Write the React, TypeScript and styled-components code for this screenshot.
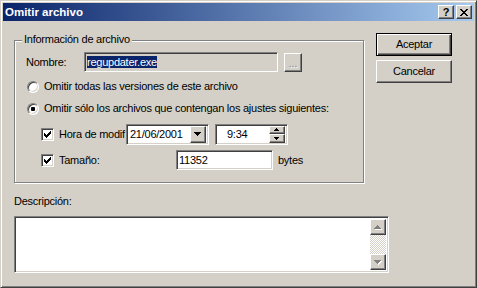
import React from "react";
import styled, { createGlobalStyle, css } from "styled-components";

const Global = createGlobalStyle`
  html, body { margin: 0; padding: 0; background: #D4D0C8; }
  body {
    font-family: "Liberation Sans", Arial, sans-serif;
    font-size: 11px;
    line-height: 13px;
    letter-spacing: -0.25px;
    color: #000;
  }
  * { box-sizing: border-box; }
`;

const raised = css`
  background: #D4D0C8;
  border: 1px solid;
  border-color: #ffffff #404040 #404040 #ffffff;
  box-shadow: inset -1px -1px 0 #808080;
`;

const sunken = css`
  border: 1px solid;
  border-color: #808080 #ffffff #ffffff #808080;
  box-shadow: inset 1px 1px 0 #404040, inset -1px -1px 0 #D4D0C8;
`;

const Window = styled.div`
  width: 477px;
  height: 288px;
  display: flex;
  flex-direction: column;
  background: #D4D0C8;
  border: 1px solid;
  border-color: #D4D0C8 #404040 #404040 #D4D0C8;
  box-shadow: inset 1px 1px 0 #ffffff, inset -1px -1px 0 #808080;
  padding: 2px;
`;

const TitleBar = styled.div`
  height: 18px;
  display: flex;
  align-items: center;
  padding: 0 2px 0 2px;
  background: linear-gradient(to right, #0a246a, #a6caf0);
`;

const Title = styled.span`
  flex: 1;
  color: #fff;
  font-weight: bold;
  font-size: 11.5px;
  line-height: 14px;
  letter-spacing: 0;
`;

const TitleBtn = styled.div<{ $gap?: number }>`
  ${raised};
  width: 16px;
  height: 14px;
  margin-left: ${(p) => p.$gap ?? 0}px;
  display: flex;
  align-items: center;
  justify-content: center;
  font-weight: bold;
  font-size: 11px;
  line-height: 12px;
  letter-spacing: 0;
`;

const Body = styled.div`
  flex: 1;
  display: flex;
  flex-direction: column;
  padding: 12px 22px 0 11px;
`;

const TopRow = styled.div`
  display: flex;
  align-items: flex-start;
  gap: 12px;
`;

const Group = styled.div`
  position: relative;
  width: 350px;
  height: 143px;
  margin-top: 7px;
  border: 1px solid #808080;
  box-shadow: 1px 1px 0 #ffffff, inset 1px 1px 0 #ffffff;
  padding: 11px 0 0 11px;
  display: flex;
  flex-direction: column;
`;

const Legend = styled.span`
  position: absolute;
  top: -8px;
  left: 7px;
  padding: 0 2px;
  background: #D4D0C8;
`;

const Row = styled.div<{ $mt?: number; $pl?: number; $h?: number }>`
  display: flex;
  align-items: center;
  margin-top: ${(p) => p.$mt ?? 0}px;
  padding-left: ${(p) => p.$pl ?? 0}px;
  height: ${(p) => p.$h ?? 13}px;
`;

const Label = styled.span<{ $w?: number; $ml?: number }>`
  display: inline-block;
  white-space: nowrap;
  margin-left: ${(p) => p.$ml ?? 0}px;
  ${(p) => (p.$w ? `width: ${p.$w}px; flex: none;` : "")}
`;

const Field = styled.div<{ $w: number; $h?: number; $bg?: string; $pl?: number; $ml?: number }>`
  ${sunken};
  width: ${(p) => p.$w}px;
  height: ${(p) => p.$h ?? 20}px;
  margin-left: ${(p) => p.$ml ?? 0}px;
  background: ${(p) => p.$bg ?? "#ffffff"};
  padding: 2px 2px 2px ${(p) => p.$pl ?? 2}px;
  display: flex;
  align-items: center;
  flex: none;
`;

const Selected = styled.span`
  background: #0a246a;
  color: #fff;
  line-height: 12px;
`;

const Browse = styled.div`
  ${raised};
  width: 18px;
  height: 19px;
  margin-left: 6px;
  display: flex;
  align-items: flex-end;
  justify-content: center;
  padding-bottom: 2px;
  color: #808080;
  text-shadow: 1px 1px 0 #ffffff;
  font-size: 10px;
  line-height: 10px;
  letter-spacing: 0px;
`;

const Radio = styled.span<{ $on?: boolean }>`
  width: 12px;
  height: 12px;
  flex: none;
  border-radius: 50%;
  border: 1px solid;
  border-color: #808080 #ffffff #ffffff #808080;
  background: #ffffff;
  box-shadow: inset 1px 1px 0 #404040, inset -1px -1px 0 #D4D0C8;
  display: flex;
  align-items: center;
  justify-content: center;
  &::after {
    content: "";
    display: ${(p) => (p.$on ? "block" : "none")};
    width: 4px;
    height: 4px;
    border-radius: 1px;
    background: #000;
  }
`;

const Check = styled.span`
  ${sunken};
  width: 13px;
  height: 13px;
  flex: none;
  background: #fff;
  display: flex;
  align-items: center;
  justify-content: center;
`;

const DropBtn = styled.div`
  ${raised};
  width: 16px;
  height: 17px;
  margin-left: auto;
  display: flex;
  align-items: center;
  justify-content: center;
  flex: none;
`;

const Spin = styled.div`
  margin-left: auto;
  width: 16px;
  height: 17px;
  display: flex;
  flex-direction: column;
  flex: none;
`;

const SpinBtn = styled.div<{ $h: number }>`
  ${raised};
  height: ${(p) => p.$h}px;
  display: flex;
  align-items: center;
  justify-content: center;
`;

const Buttons = styled.div`
  display: flex;
  flex-direction: column;
  gap: 4px;
`;

const PushButton = styled.div<{ $default?: boolean }>`
  width: 76px;
  height: 23px;
  display: flex;
  align-items: center;
  justify-content: center;
  background: #D4D0C8;
  ${(p) =>
    p.$default
      ? css`
          border: 1px solid #000;
          box-shadow: inset 1px 1px 0 #ffffff, inset -1px -1px 0 #404040,
            inset -2px -2px 0 #808080;
        `
      : css`
          border: 1px solid;
          border-color: #ffffff #404040 #404040 #ffffff;
          box-shadow: inset -1px -1px 0 #808080;
        `}
`;

const DescLabel = styled.div`
  margin-top: 12px;
`;

const Memo = styled.div`
  ${sunken};
  margin-top: 8px;
  width: 375px;
  height: 57px;
  background: #fff;
  padding: 2px;
  display: flex;
  justify-content: flex-end;
`;

const ScrollBar = styled.div`
  width: 16px;
  height: 100%;
  display: flex;
  flex-direction: column;
  background: repeating-conic-gradient(#ffffff 0 25%, #D4D0C8 0 50%) 0 0 / 2px 2px;
`;

const ScrollBtn = styled.div`
  ${raised};
  width: 16px;
  height: 16px;
  flex: none;
  display: flex;
  align-items: center;
  justify-content: center;
`;

const Track = styled.div`
  flex: 1;
`;

const CloseGlyph = () => (
  <svg width="8" height="7" viewBox="0 0 8 7" shapeRendering="crispEdges">
    <path
      d="M0 0h2v1h-2zM6 0h2v1h-2zM1 1h2v1h-2zM5 1h2v1h-2zM2 2h4v1h-4zM3 3h2v1h-2zM2 4h4v1h-4zM1 5h2v1h-2zM5 5h2v1h-2zM0 6h2v1h-2zM6 6h2v1h-2z"
      fill="#000"
    />
  </svg>
);

const CheckGlyph = () => (
  <svg width="7" height="7" viewBox="0 0 7 7" shapeRendering="crispEdges">
    <path
      d="M6 0h1v3h-1zM5 1h1v3h-1zM4 2h1v3h-1zM0 2h1v3h-1zM1 3h1v3h-1zM2 4h1v3h-1zM3 3h1v3h-1z"
      fill="#000"
    />
  </svg>
);

const Triangle = ({ up, w, color, emboss }: { up?: boolean; w: number; color: string; emboss?: boolean }) => {
  const h = Math.ceil(w / 2);
  const rows: string[] = [];
  for (let i = 0; i < h; i++) {
    const len = w - i * 2;
    const y = up ? h - 1 - i : i;
    rows.push(`M${i} ${y}h${len}v1h-${len}z`);
  }
  const d = rows.join("");
  return (
    <svg width={w + 1} height={h + 1} viewBox={`0 0 ${w + 1} ${h + 1}`} shapeRendering="crispEdges">
      {emboss && <path d={d} fill="#ffffff" transform="translate(1 1)" />}
      <path d={d} fill={color} />
    </svg>
  );
};

export default function App() {
  return (
    <>
      <Global />
      <Window>
        <TitleBar>
          <Title>Omitir archivo</Title>
          <TitleBtn>?</TitleBtn>
          <TitleBtn $gap={2}>
            <CloseGlyph />
          </TitleBtn>
        </TitleBar>
        <Body>
          <TopRow>
            <Group>
              <Legend>Información de archivo</Legend>
              <Row $h={20}>
                <Label $w={58}>Nombre:</Label>
                <Field $w={194} $bg="#D4D0C8">
                  <Selected>regupdater.exe</Selected>
                </Field>
                <Browse>...</Browse>
              </Row>
              <Row $mt={8} $pl={1}>
                <Radio />
                <Label $ml={5}>Omitir todas las versiones de este archivo</Label>
              </Row>
              <Row $mt={9} $pl={1}>
                <Radio $on />
                <Label $ml={5}>Omitir sólo los archivos que contengan los ajustes siguientes:</Label>
              </Row>
              <Row $mt={9} $pl={15} $h={21}>
                <Check>
                  <CheckGlyph />
                </Check>
                <Label $w={67} $ml={5}>Hora de modif</Label>
                <Field $w={83} $h={21} $pl={3}>
                  <span>21/06/2001</span>
                  <DropBtn>
                    <Triangle w={7} color="#000" />
                  </DropBtn>
                </Field>
                <Field $w={73} $h={21} $pl={11} $ml={6}>
                  <span>9:34</span>
                  <Spin>
                    <SpinBtn $h={8}>
                      <Triangle up w={5} color="#000" />
                    </SpinBtn>
                    <SpinBtn $h={9}>
                      <Triangle w={5} color="#000" />
                    </SpinBtn>
                  </Spin>
                </Field>
              </Row>
              <Row $mt={5} $pl={15} $h={20}>
                <Check>
                  <CheckGlyph />
                </Check>
                <Label $w={117} $ml={5}>Tamaño:</Label>
                <Field $w={97}>
                  <span>11352</span>
                </Field>
                <Label $ml={5}>bytes</Label>
              </Row>
            </Group>
            <Buttons>
              <PushButton $default>Aceptar</PushButton>
              <PushButton>Cancelar</PushButton>
            </Buttons>
          </TopRow>
          <DescLabel>Descripción:</DescLabel>
          <Memo>
            <ScrollBar>
              <ScrollBtn>
                <Triangle up w={7} color="#808080" emboss />
              </ScrollBtn>
              <Track />
              <ScrollBtn>
                <Triangle w={7} color="#808080" emboss />
              </ScrollBtn>
            </ScrollBar>
          </Memo>
        </Body>
      </Window>
    </>
  );
}
